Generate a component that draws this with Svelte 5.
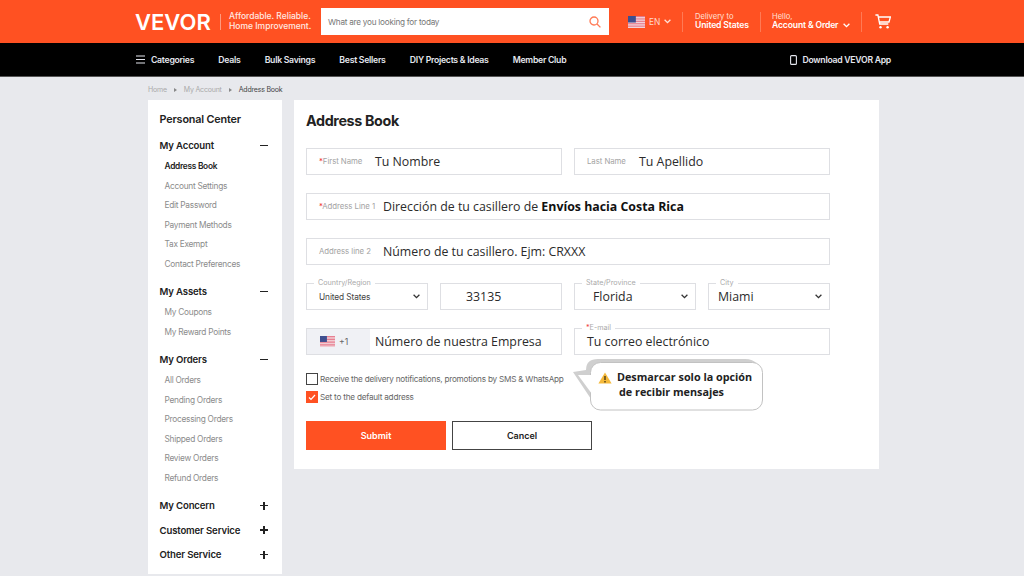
<script>
  const groups = [
    { title: 'My Account', open: true, items: ['Address Book', 'Account Settings', 'Edit Password', 'Payment Methods', 'Tax Exempt', 'Contact Preferences'] },
    { title: 'My Assets', open: true, items: ['My Coupons', 'My Reward Points'] },
    { title: 'My Orders', open: true, items: ['All Orders', 'Pending Orders', 'Processing Orders', 'Shipped Orders', 'Review Orders', 'Refund Orders'] },
    { title: 'My Concern', open: false, items: [] },
    { title: 'Customer Service', open: false, items: [] },
    { title: 'Other Service', open: false, items: [] }
  ];
  const nav = ['Deals', 'Bulk Savings', 'Best Sellers', 'DIY Projects & Ideas', 'Member Club'];
  const stripes = [0, 1, 2, 3, 4, 5, 6];
</script>

{#snippet flag(w, h)}
  <svg class="flag" width={w} height={h} viewBox="0 0 26 14" preserveAspectRatio="none">
    <rect width="26" height="14" fill="#f6f1f3" />
    {#each stripes as s}
      <rect y={s * 2} width="26" height="1.1" fill="#e56f82" />
    {/each}
    <rect width="12" height="7.6" fill="#3f4f8f" />
  </svg>
{/snippet}

{#snippet chevron(color)}
  <svg class="chev" width="7" height="5" viewBox="0 0 7 5"><path d="M.6.8l2.9 2.9L6.4.8" fill="none" stroke={color} stroke-width="1.3" /></svg>
{/snippet}

<div class="page">
  <header class="top">
    <div class="brand">
      <span class="logo">VEVOR</span>
      <span class="slogan">Affordable. Reliable.<br />Home Improvement.</span>
    </div>
    <div class="search">
      <span>What are you looking for today</span>
      <svg width="12" height="12" viewBox="0 0 12 12"><circle cx="5" cy="5" r="4" fill="none" stroke="#ff7a55" stroke-width="1.3" /><path d="M8 8l3.4 3.4" stroke="#ff7a55" stroke-width="1.3" /></svg>
    </div>
    <div class="lang">
      {@render flag(17, 12)}
      <span>EN</span>
      {@render chevron('#ffe4db')}
    </div>
    <div class="tiny delivery"><span>Delivery to</span><b>United States</b></div>
    <div class="tiny account"><span>Hello,</span><b>Account &amp; Order {@render chevron('#fff')}</b></div>
    <div class="cartwrap">
      <svg width="16" height="15" viewBox="0 0 16 15"><path d="M.4 1h2.5l1.8 9h8.6M3.4 3h12l-1.4 5H4.4" fill="none" stroke="#fff" stroke-width="1.3" /><circle cx="5.5" cy="13.2" r="1.2" fill="#fff" /><circle cx="12.6" cy="13.2" r="1.2" fill="#fff" /></svg>
    </div>
  </header>

  <nav class="bar">
    <div class="cat">
      <svg width="9" height="9" viewBox="0 0 9 9"><path d="M0 1h9M0 4.5h9M0 8h9" stroke="#e4e6ee" stroke-width="1.1" /></svg>
      <span>Categories</span>
    </div>
    {#each nav as n}<span>{n}</span>{/each}
    <div class="app">
      <svg width="7" height="10" viewBox="0 0 7 10"><rect x=".6" y=".6" width="5.8" height="8.8" rx="1" fill="none" stroke="#e4e6ee" stroke-width="1.1" /></svg>
      <span>Download VEVOR App</span>
    </div>
  </nav>

  <div class="crumbs">
    <span>Home</span><i></i><span>My Account</span><i></i><span class="now">Address Book</span>
  </div>

  <div class="content">
    <aside class="side">
      <h2>Personal Center</h2>
      {#each groups as g}
        <section class="group" class:closed={!g.open}>
          <div class="ghead">
            <span>{g.title}</span>
            <span class="sign" class:plus={!g.open}></span>
          </div>
          {#each g.items as item}
            <div class="item" class:active={item === 'Address Book'}>{item}</div>
          {/each}
        </section>
      {/each}
    </aside>

    <main class="panel">
      <h1>Address Book</h1>
      <div class="form">
        <div class="row">
          <div class="field half-f"><span class="inlabel w56"><em>*</em>First Name</span><span class="val">Tu Nombre</span></div>
          <div class="field half-f"><span class="inlabel w52">Last Name</span><span class="val">Tu Apellido</span></div>
        </div>
        <div class="row">
          <div class="field full"><span class="inlabel w64"><em>*</em>Address Line 1</span><span class="val">Dirección de tu casillero de <b>Envíos hacia Costa Rica</b></span></div>
        </div>
        <div class="row">
          <div class="field full"><span class="inlabel w64">Address line 2</span><span class="val">Número de tu casillero. Ejm: CRXXX</span></div>
        </div>
        <div class="row">
          <div class="field sel us"><span class="legend">Country/Region</span><span class="small">United States</span>{@render chevron('#333')}</div>
          <div class="field sel zip"><span class="val">33135</span></div>
          <div class="field sel fl"><span class="legend">State/Province</span><span class="val">Florida</span>{@render chevron('#333')}</div>
          <div class="field sel mi"><span class="legend">City</span><span class="val">Miami</span>{@render chevron('#333')}</div>
        </div>
        <div class="row">
          <div class="field half-f phone">
            <div class="code">{@render flag(15, 11)}<span>+1</span></div>
            <span class="val">Número de nuestra Empresa</span>
          </div>
          <div class="field half-f"><span class="legend"><em>*</em>E-mail</span><span class="val">Tu correo electrónico</span></div>
        </div>
      </div>

      <div class="checks">
        <div class="check"><span class="box"></span>Receive the delivery notifications, promotions by SMS &amp; WhatsApp</div>
        <div class="check"><span class="box on"><svg width="8" height="7" viewBox="0 0 8 7"><path d="M1 3.5l2 2 4-4.5" fill="none" stroke="#fff" stroke-width="1.2" /></svg></span>Set to the default address</div>
      </div>

      <div class="actions">
        <button class="submit">Submit</button>
        <button class="cancel">Cancel</button>
      </div>

      <div class="bubble">
        <svg class="shape" width="191" height="54" viewBox="0 0 191 54">
          <path d="M13 12Q13 1 25 1H172Q180 1 184 6L20 44L0 14z" fill="#cfcfcf" />
          <rect x="17.5" y="4.5" width="172" height="47.5" rx="10" fill="#fff" stroke="#c2c2c2" />
          <path d="M5 17L19 17V36z" fill="#fff" />
        </svg>
        <svg class="warn" width="14" height="12" viewBox="0 0 14 12"><path d="M7 .5L13.6 11.6H.4z" fill="#f5b93a" /><path d="M7 4v4M7 9v1.4" stroke="#4a3b16" stroke-width="1.4" /></svg>
        <p>Desmarcar solo la opción<br /><span>de recibir mensajes</span></p>
      </div>
    </main>
  </div>
</div>

<style>
  :global(body) { margin: 0; background: #e8e9ed; }
  .page { width: 1024px; height: 576px; overflow: hidden; font-family: Inter, "Liberation Sans", sans-serif; background: #e8e9ed; }

  .top { height: 43px; background: #ff5122; display: flex; align-items: center; padding-left: 135px; color: #fff; box-sizing: border-box; }
  .brand { display: flex; align-items: center; width: 186px; }
  .logo { font-size: 22px; font-weight: 600; letter-spacing: 0; width: 85px; border-right: 1px solid #ff9a7e; line-height: 16px; margin-right: 8px; flex: none; }
  .slogan { font-size: 8.5px; line-height: 9.5px; font-weight: 500; white-space: nowrap; color: #ffe9e2; }
  .search { width: 288px; height: 27px; background: #fff; display: flex; align-items: center; justify-content: space-between; padding: 0 8px 0 7px; box-sizing: border-box; font-size: 8.2px; letter-spacing: -0.25px; color: #777; }
  .lang { display: flex; align-items: center; gap: 4px; font-size: 8.4px; color: #ffd9cd; margin-left: 19px; width: 54px; flex: none; }
  .tiny { display: flex; flex-direction: column; font-size: 7.6px; line-height: 9.5px; border-left: 1px solid #ff7a55; height: 20px; box-sizing: border-box; color: #ffe0d6; flex: none; }
  .tiny b { font-size: 8.6px; font-weight: 600; letter-spacing: -0.15px; color: #fff; white-space: nowrap; }
  .tiny :global(.chev) { margin-left: 3px; }
  .delivery { width: 78px; padding-left: 12px; }
  .account { width: 101px; padding-left: 11px; }
  .cartwrap { border-left: 1px solid #ff7a55; height: 20px; padding-left: 13px; display: flex; align-items: center; }

  .bar { height: 34px; background: #000; border-bottom: 1px solid #555; box-sizing: border-box; display: flex; align-items: center; padding-left: 136px; gap: 24.2px; color: #e4e6ee; font-size: 8.7px; letter-spacing: -0.28px; font-weight: 600; white-space: nowrap; }
  .cat { display: flex; align-items: center; gap: 6px; }
  .app { display: flex; align-items: center; gap: 5px; margin-left: auto; margin-right: 133px; }

  .crumbs { height: 23px; padding-top: 2px; display: flex; align-items: center; padding-left: 148px; font-size: 7px; letter-spacing: -0.2px; color: #aaa; box-sizing: border-box; white-space: nowrap; }
  .crumbs i { width: 0; height: 0; border-left: 3px solid #888; border-top: 2px solid transparent; border-bottom: 2px solid transparent; margin: 0 7px; }
  .now { color: #444; }

  .content { display: flex; align-items: flex-start; gap: 12px; padding-left: 148px; }
  .side { width: 134px; height: 474px; background: #fff; padding: 13px 14px 0 11.5px; box-sizing: border-box; }
  .side h2 { margin: 0 0 13px; font-size: 10.8px; line-height: 13px; font-weight: 600; letter-spacing: -0.15px; color: #222; }
  .group { padding-bottom: 11px; }
  .group.closed { padding-bottom: 6.5px; }
  .ghead { display: flex; align-items: center; justify-content: space-between; font-size: 9.6px; line-height: 13px; font-weight: 600; letter-spacing: -0.15px; color: #222; padding-bottom: 5px; }
  .sign { width: 8px; height: 1.6px; background: #222; position: relative; }
  .plus::after { content: ""; position: absolute; left: 3.2px; top: -3.2px; width: 1.6px; height: 8px; background: #222; }
  .item { font-size: 8.3px; letter-spacing: -0.26px; line-height: 19.5px; padding-left: 5px; color: #8b8b8b; white-space: nowrap; }
  .item.active { color: #222; font-weight: 600; }

  .panel { position: relative; width: 585px; height: 369px; background: #fff; padding: 11px 12px; box-sizing: border-box; }
  .panel h1 { margin: 0 0 18px; font-size: 14.3px; line-height: 19px; font-weight: 700; letter-spacing: -0.35px; color: #222; }
  .form { width: 524px; display: flex; flex-direction: column; gap: 18px; }
  .row { display: flex; gap: 12px; }
  .field { position: relative; height: 27px; border: 1px solid #dedfe3; box-sizing: border-box; display: flex; align-items: center; padding-left: 12px; white-space: nowrap; }
  .half-f { flex: 0 0 256px; }
  .full { flex: 0 0 524px; }
  .inlabel { font-size: 7.8px; letter-spacing: -0.05px; color: #a3a3a3; flex: none; margin-top: -2px; }
  .w56 { width: 56px; }
  .w52 { width: 52px; }
  .w64 { width: 64px; }
  em { color: #e33; font-style: normal; }
  .val { font-family: "Open Sans", "Liberation Sans", sans-serif; font-size: 12.35px; color: #2b2b2b; }
  .val b { font-weight: 700; color: #111; }
  .legend { position: absolute; left: 7px; top: -6px; background: #fff; padding: 0 4px; font-size: 7.2px; line-height: 9px; color: #aaa; }
  .small { font-size: 8.3px; letter-spacing: -0.1px; color: #444; }
  .sel { flex: 0 0 122px; justify-content: space-between; padding-right: 7px; }
  .zip { padding-left: 25px; }
  .fl { padding-left: 18px; }
  .mi { padding-left: 9px; }
  .phone { padding-left: 0; }
  .code { width: 63px; height: 25px; background: #f0f1f5; display: flex; align-items: center; gap: 4px; padding-left: 13px; box-sizing: border-box; font-size: 8.6px; color: #666; margin-right: 5px; flex: none; }
  .checks { margin-top: 18px; display: flex; flex-direction: column; gap: 6px; }
  .check { display: flex; align-items: center; gap: 2px; font-size: 8.2px; letter-spacing: -0.23px; line-height: 12px; color: #666; white-space: nowrap; }
  .box { width: 12px; height: 12px; border: 1px solid #444; box-sizing: border-box; display: flex; align-items: center; justify-content: center; flex: none; }
  .box.on { background: #ff5122; border-color: #ff5122; }
  .actions { margin-top: 18px; display: flex; gap: 6px; }
  button { width: 140px; height: 29px; font-family: inherit; font-size: 9px; font-weight: 600; box-sizing: border-box; }
  .submit { background: #ff5122; border: none; color: #fff; }
  .cancel { background: #fff; border: 1px solid #444; color: #222; }

  .bubble { position: absolute; left: 279px; top: 258px; width: 191px; height: 54px; }
  .shape { position: absolute; left: 0; top: 0; }
  .warn { position: absolute; left: 25px; top: 14px; }
  .bubble p { position: absolute; left: 44px; top: 11px; margin: 0; font-family: "Open Sans", "Liberation Sans", sans-serif; font-size: 10.8px; line-height: 15px; font-weight: 700; color: #222; white-space: nowrap; }
  .bubble p span { margin-left: 2px; }
</style>
